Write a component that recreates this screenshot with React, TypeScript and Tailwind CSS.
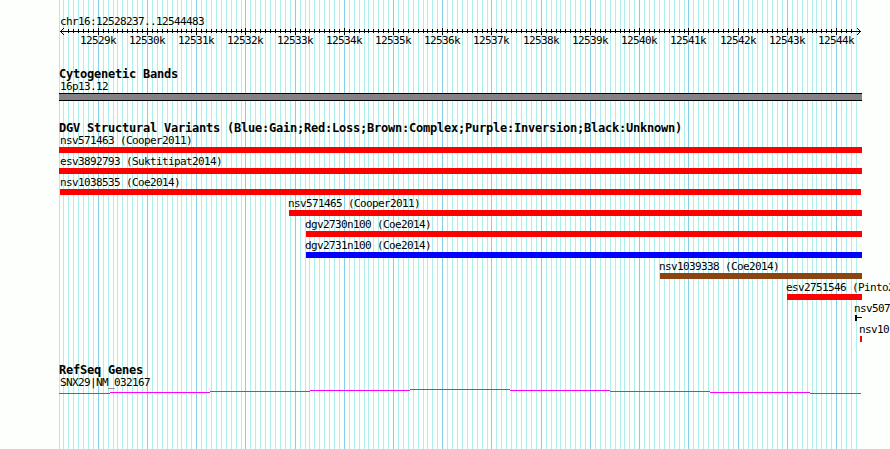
import React from "react";

const MAJOR = [98, 147, 196, 245, 295, 344, 393, 442, 491, 541, 590, 639, 688, 738, 787, 836];
// Tick numbers (ten per kilobase) reached by a 4px step instead of 5px.
const SHORT_STEPS = [4, 17, 30, 43, 55, 67, 80, 94, 107, 120, 133, 146];

const TICKS: number[] = [59, 63, 68, 73, 78, 83, 88, 93, 98];
for (let n = 1, x = 98; n <= 154; n++) {
  x += SHORT_STEPS.includes(n) ? 4 : 5;
  TICKS.push(x);
}

type Variant = { name: string; text: number; start: number; end: number; color: string };

const VARIANTS: Variant[] = [
  { name: "nsv571463 (Cooper2011)", text: 60, start: 59, end: 862, color: "bg-[#ff0000]" },
  { name: "esv3892793 (Suktitipat2014)", text: 60, start: 59, end: 862, color: "bg-[#ff0000]" },
  { name: "nsv1038535 (Coe2014)", text: 60, start: 60, end: 861, color: "bg-[#ff0000]" },
  { name: "nsv571465 (Cooper2011)", text: 288, start: 289, end: 862, color: "bg-[#ff0000]" },
  { name: "dgv2730n100 (Coe2014)", text: 305, start: 306, end: 862, color: "bg-[#ff0000]" },
  { name: "dgv2731n100 (Coe2014)", text: 305, start: 306, end: 862, color: "bg-[#0000ff]" },
  { name: "nsv1039338 (Coe2014)", text: 659, start: 660, end: 862, color: "bg-[#8b4513]" },
  { name: "esv2751546 (Pinto2", text: 786, start: 787, end: 862, color: "bg-[#ff0000]" },
  { name: "nsv507", text: 854, start: 855, end: 862, color: "" },
  { name: "nsv10", text: 859, start: 860, end: 862, color: "bg-[#ff0000]" },
];

const SMALL =
  "block h-[13px] whitespace-pre font-['DejaVu_Sans_Mono',monospace] text-[11px] leading-[13px] tracking-[-0.622px]";
const BOLD =
  "block h-[12px] whitespace-pre pl-[59px] font-['DejaVu_Sans_Mono',monospace] text-[12px] font-bold leading-[12px] tracking-[-0.224px]";

function Grid() {
  return (
    <svg className="absolute inset-0" width="890" height="449" shapeRendering="crispEdges">
      {TICKS.map((x) => (
        <rect key={x} x={x} y="0" width="1" height="449" fill={MAJOR.includes(x) ? "#87ceeb" : "#afeeee"} />
      ))}
    </svg>
  );
}

function Ruler() {
  return (
    <svg className="block" width="890" height="7" shapeRendering="crispEdges">
      <rect x="60" y="3" width="801" height="1" />
      {TICKS.filter((x) => x > 64 && x < 856).map((x) =>
        MAJOR.includes(x) ? (
          <rect key={x} x={x} y="0" width="1" height="7" />
        ) : (
          <rect key={x} x={x} y="1" width="1" height="4" />
        ),
      )}
      {[1, 2, 3].map((d) => (
        <g key={d}>
          <rect x={60 + d} y={3 - d} width="1" height="1" />
          <rect x={60 + d} y={3 + d} width="1" height="1" />
          <rect x={860 - d} y={3 - d} width="1" height="1" />
          <rect x={860 - d} y={3 + d} width="1" height="1" />
        </g>
      ))}
    </svg>
  );
}

function VariantRow({ v }: { v: Variant }) {
  return (
    <div className="h-[21px]">
      <span className={SMALL} style={{ paddingLeft: v.text }}>
        {v.name}
      </span>
      <div className="flex h-[6px] items-start" style={{ marginLeft: v.start, width: v.end - v.start }}>
        {v.color ? (
          <div className={`h-[6px] w-full ${v.color}`} />
        ) : (
          <>
            <div className="h-[6px] w-[2px] bg-black" />
            <div className="mt-[2px] h-px flex-1 bg-black" />
          </>
        )}
      </div>
    </div>
  );
}

export default function App() {
  return (
    <div className="relative h-[449px] w-[890px] overflow-hidden bg-[#fdfffc] text-black">
      <Grid />
      <div className="relative flex flex-col pt-[15px]">
        <span className={`${SMALL} pl-[60px]`}>chr16:12528237..12544483</span>
        <Ruler />
        <div className="-mt-px flex pl-[80px]">
          {MAJOR.map((x, i) => (
            <span key={x} className={`${SMALL} shrink-0`} style={{ width: (MAJOR[i + 1] ?? x + 49) - x }}>
              {12529 + i}k
            </span>
          ))}
        </div>

        <section className="mt-[21px]">
          <h2 className={BOLD}>Cytogenetic Bands</h2>
          <span className={`${SMALL} pl-[60px]`}>16p13.12</span>
          <div className="ml-[59px] h-[8px] w-[803px] border-y border-black bg-[#848284]" />
        </section>

        <section className="mt-[21px]">
          <h2 className={BOLD}>
            DGV Structural Variants (Blue:Gain;Red:Loss;Brown:Complex;Purple:Inversion;Black:Unknown)
          </h2>
          {VARIANTS.map((v) => (
            <VariantRow key={v.name} v={v} />
          ))}
        </section>

        <section className="mt-[20px]">
          <h2 className={BOLD}>RefSeq Genes</h2>
          <span className={`${SMALL} pl-[60px]`}>SNX29|NM_032167</span>
          <svg className="block" width="890" height="5" shapeRendering="crispEdges" fill="#ff00ff">
            <rect x="59" y="4" width="51" height="1" />
            <rect x="110" y="3" width="100" height="1" />
            <rect x="210" y="2" width="100" height="1" />
            <rect x="310" y="1" width="100" height="1" />
            <rect x="410" y="0" width="100" height="1" />
            <rect x="510" y="1" width="100" height="1" />
            <rect x="610" y="2" width="100" height="1" />
            <rect x="710" y="3" width="100" height="1" />
            <rect x="810" y="4" width="51" height="1" />
          </svg>
        </section>
      </div>
    </div>
  );
}
